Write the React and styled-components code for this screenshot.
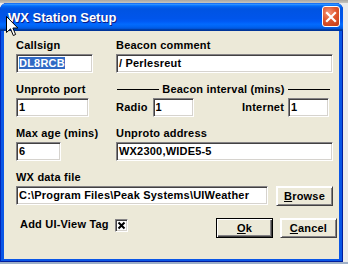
import React from 'react';
import styled, { createGlobalStyle } from 'styled-components';

const GlobalStyle = createGlobalStyle`
  html, body { margin: 0; padding: 0; }
  body {
    width: 348px;
    height: 264px;
    overflow: hidden;
    background: #e6e6e6;
    font-family: "Liberation Sans", Arial, sans-serif;
  }
`;

const Desktop = styled.div`
  position: relative;
  width: 348px;
  height: 264px;
  box-sizing: border-box;
  padding-top: 3px;
  background: linear-gradient(to bottom, #a9a6a0 0, #c9c6bf 3px, #ebebeb 3px, #ebebeb 262px, #9fb0c8 262px);
`;

const Window = styled.div`
  width: 343px;
  height: 259px;
  display: flex;
  flex-direction: column;
  border-radius: 7px 7px 0 0;
  overflow: hidden;
  background: #0a56e6;
  box-shadow: inset 1px 0 #0026b8, inset -1px 0 #001c9c, inset 0 -1px #001c9c;
`;

const TitleBar = styled.div`
  height: 28px;
  flex: none;
  display: flex;
  align-items: center;
  justify-content: space-between;
  padding: 0 3px 0 8px;
  box-sizing: border-box;
  background: linear-gradient(to bottom, #0058ee 0%, #3593ff 4%, #288eff 6%, #127dff 8%, #036ffc 10%, #0262ee 14%, #0057e5 20%, #0054e3 24%, #0055eb 56%, #005bf5 66%, #026afe 76%, #0062ef 86%, #0052d6 92%, #0040ab 94%, #003092 100%);
`;

const Title = styled.span`
  color: #fff;
  font: bold 13px/15px "Liberation Sans", Arial, sans-serif;
  text-shadow: 1px 1px #0a1b84;
  white-space: nowrap;
`;

const CloseButton = styled.div`
  align-self: flex-start;
  margin-top: 3px;
  width: 18px;
  height: 21px;
  box-sizing: border-box;
  border: 1px solid #fff;
  border-radius: 3px;
  background: radial-gradient(circle at 35% 30%, #f4967a 0%, #e0572f 45%, #c43a15 100%);
  display: flex;
  align-items: center;
  justify-content: center;
`;

const Client = styled.div`
  flex: 1;
  margin: 0 4px 3px;
  background: #ece9d8;
  padding: 8px 6px 0 12px;
  display: flex;
  flex-direction: column;
`;

const FormGrid = styled.div`
  display: grid;
  grid-template-columns: 100px 217px;
  row-gap: 10px;
`;

const Field = styled.div`
  display: flex;
  flex-direction: column;
  gap: 2px;
  grid-column: ${p => (p.$span ? '1 / -1' : 'auto')};
`;

const Label = styled.span`
  font: bold 11px/13px "Liberation Sans", Arial, sans-serif;
  letter-spacing: 0.2px;
  color: #000;
  white-space: nowrap;
`;

const TextBox = styled.div`
  width: ${p => p.$w}px;
  height: 19px;
  box-sizing: border-box;
  flex: none;
  background: #fff;
  border: 1px solid;
  border-color: #848284 #fff #fff #848284;
  box-shadow: inset 1px 1px #424142, inset -1px -1px #d6d3ce;
  padding: 0 2px;
  font: bold 11px/17px "Liberation Sans", Arial, sans-serif;
  letter-spacing: 0.2px;
  color: #000;
  white-space: nowrap;
  overflow: hidden;
`;

const Selected = styled.span`
  background: #316ac5;
  color: #fff;
`;

const GroupHeader = styled.div`
  height: 13px;
  display: flex;
  align-items: center;
  gap: 3px;
  margin: 0 3px 0 1px;
`;

const Rule = styled.div`
  flex: 1;
  height: 1px;
  background: #000;
`;

const InlineRow = styled.div`
  display: flex;
  align-items: center;
  gap: ${p => p.$gap || 4}px;
`;

const Spacer = styled.div`
  flex: 1;
`;

const RadioRow = styled.div`
  display: flex;
  align-items: center;
  padding-right: 4px;
`;

const FileRow = styled.div`
  display: flex;
  align-items: flex-start;
  gap: 8px;
`;

const BottomRow = styled.div`
  display: flex;
  align-items: flex-start;
  justify-content: space-between;
  margin-top: 12px;
  padding-left: 4px;
  width: 317px;
`;

const CheckGroup = styled.div`
  display: flex;
  align-items: flex-start;
  gap: 6px;
`;

const CheckBox = styled.div`
  margin-top: 1px;
  width: 13px;
  height: 13px;
  box-sizing: border-box;
  background: #fff;
  border: 1px solid;
  border-color: #848284 #fff #fff #848284;
  box-shadow: inset 1px 1px #424142, inset -1px -1px #d6d3ce;
  display: flex;
  align-items: center;
  justify-content: center;
`;

const Buttons = styled.div`
  display: flex;
  gap: 7px;
`;

const Button = styled.div`
  width: ${p => p.$w || 57}px;
  height: 20px;
  box-sizing: border-box;
  display: flex;
  align-items: center;
  justify-content: center;
  background: #ece9d8;
  border: 1px solid ${p => (p.$default ? '#000' : 'transparent')};
  box-shadow: ${p =>
    p.$default
      ? 'inset 1px 1px #fff, inset -1px -1px #424142, inset -2px -2px #848284'
      : 'inset 1px 1px #fff, inset -1px -1px #848284'};
  ${p => (!p.$default ? 'border-color: #fff #424142 #424142 #fff;' : '')}
  font: bold 11px/13px "Liberation Sans", Arial, sans-serif;
  letter-spacing: 0.2px;
  color: #000;
  padding-top: 1px;
  u { text-decoration: underline; text-underline-offset: 1px; }
`;

const Cursor = styled.svg`
  position: absolute;
  left: 6px;
  top: 16px;
`;

export default function App() {
  return (
    <>
      <GlobalStyle />
      <Desktop>
        <Window>
          <TitleBar>
            <Title>WX Station Setup</Title>
            <CloseButton>
              <svg width="12" height="12" viewBox="0 0 12 12">
                <path d="M2 2 L10 10 M10 2 L2 10" stroke="#fff" strokeWidth="2.2" strokeLinecap="square" />
              </svg>
            </CloseButton>
          </TitleBar>
          <Client>
            <FormGrid>
              <Field>
                <Label>Callsign</Label>
                <TextBox $w={77}><Selected>DL8RCB</Selected></TextBox>
              </Field>
              <Field>
                <Label>Beacon comment</Label>
                <TextBox $w={217}>/ Perlesreut</TextBox>
              </Field>
              <Field>
                <Label>Unproto port</Label>
                <TextBox $w={73}>1</TextBox>
              </Field>
              <Field>
                <GroupHeader>
                  <Rule />
                  <Label>Beacon interval (mins)</Label>
                  <Rule />
                </GroupHeader>
                <RadioRow>
                  <InlineRow $gap={5}>
                    <Label>Radio</Label>
                    <TextBox $w={41}>1</TextBox>
                  </InlineRow>
                  <Spacer />
                  <InlineRow $gap={4}>
                    <Label>Internet</Label>
                    <TextBox $w={41}>1</TextBox>
                  </InlineRow>
                </RadioRow>
              </Field>
              <Field>
                <Label>Max age (mins)</Label>
                <TextBox $w={45}>6</TextBox>
              </Field>
              <Field>
                <Label>Unproto address</Label>
                <TextBox $w={217}>WX2300,WIDE5-5</TextBox>
              </Field>
              <Field $span>
                <Label>WX data file</Label>
                <FileRow>
                  <TextBox $w={252}>{'C:\\Program Files\\Peak Systems\\UIWeather'}</TextBox>
                  <Button $w={57}><span><u>B</u>rowse</span></Button>
                </FileRow>
              </Field>
            </FormGrid>
            <BottomRow>
              <CheckGroup>
                <Label>Add UI-View Tag</Label>
                <CheckBox>
                  <svg width="9" height="9" viewBox="0 0 9 9">
                    <path d="M1.5 1.5 L7.5 7.5 M7.5 1.5 L1.5 7.5" stroke="#000" strokeWidth="2" />
                  </svg>
                </CheckBox>
              </CheckGroup>
              <Buttons>
                <Button $default $w={57}><span><u>O</u>k</span></Button>
                <Button $w={57}><span><u>C</u>ancel</span></Button>
              </Buttons>
            </BottomRow>
          </Client>
        </Window>
        <Cursor width="13" height="21" viewBox="0 0 13 21">
          <path d="M0.5 0.5 L0.5 16.5 L4.5 12.8 L7.3 19.5 L9.6 18.5 L6.9 12 L11.8 12 Z" fill="#fff" stroke="#000" strokeWidth="1" strokeLinejoin="miter" />
        </Cursor>
      </Desktop>
    </>
  );
}
